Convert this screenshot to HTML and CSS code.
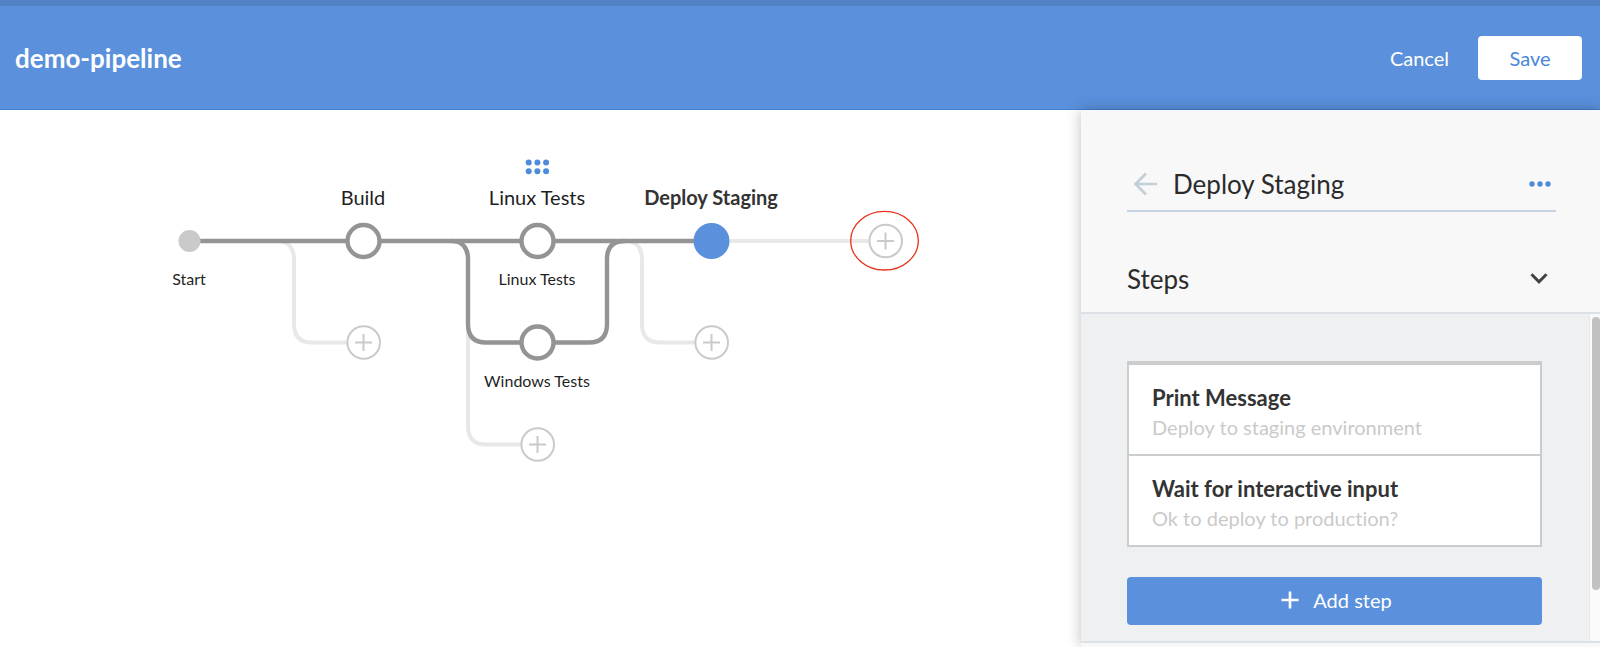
FILE: index.html
```html
<!DOCTYPE html>
<html lang="en">
<head>
<meta charset="utf-8">
<meta name="viewport" content="width=device-width, initial-scale=1">
<title>demo-pipeline</title>
<link rel="stylesheet" href="styles.css">
</head>
<body>
<header class="topbar">
  <h1 class="topbar-title">demo-pipeline</h1>
  <div class="topbar-actions">
    <button class="btn-cancel" type="button">Cancel</button>
    <button class="btn-save" type="button">Save</button>
  </div>
</header>
<main class="editor">
  <section class="graph" aria-label="Pipeline">
    <svg class="graph-lines" width="940" height="400" viewBox="0 0 940 400" fill="none" aria-hidden="true">
      <g stroke="#e8e8e8" stroke-width="4">
        <path d="M711 131H868"/>
        <path d="M278 131C289 131 294 139 294 149V214Q294 232.500 312 232.500H347"/>
        <path d="M626 131C637 131 642 139 642 149V214Q642 232.500 660 232.500H695"/>
        <path d="M468 200V316Q468 334.500 486 334.500H521"/>
      </g>
      <g stroke="#949494" stroke-width="4.400">
        <path d="M199 131H711"/>
        <path d="M452 131C463 131 468 139 468 149V214Q468 232.500 486 232.500H589Q607 232.500 607 214V149Q607 131 625 131"/>
      </g>
      <circle cx="189.500" cy="131" r="11" fill="#cacaca"/>
      <g fill="#fff" stroke="#949494" stroke-width="4.400">
        <circle cx="363.500" cy="131" r="16"/>
        <circle cx="537.500" cy="131" r="16"/>
        <circle cx="537.500" cy="232.500" r="16"/>
      </g>
      <circle cx="711.500" cy="131" r="18" fill="#5a90dc"/>
      <g fill="#fff" stroke="#cacaca" stroke-width="2">
        <path d="M380 232.500A16.300 16.300 0 1 1 347.400 232.500A16.300 16.300 0 1 1 380 232.500M363.500 224V241M355 232.500H372"/>
        <path d="M728 232.500A16.300 16.300 0 1 1 695.400 232.500A16.300 16.300 0 1 1 728 232.500M711.500 224V241M703 232.500H720"/>
        <path d="M554 334.500A16.300 16.300 0 1 1 521.400 334.500A16.300 16.300 0 1 1 554 334.500M537.500 326V343M529 334.500H546"/>
        <path d="M902 131A16.300 16.300 0 1 1 869.400 131A16.300 16.300 0 1 1 902 131M885.500 122.500V139.500M877 131H894"/>
      </g>
      <ellipse cx="884.500" cy="130.700" rx="33.800" ry="29.300" stroke="#e8321a" stroke-width="1.300"/>
      <g fill="#4f8bdb">
        <circle cx="528.700" cy="52.500" r="3"/><circle cx="537.400" cy="52.500" r="3"/><circle cx="546.100" cy="52.500" r="3"/>
        <circle cx="528.700" cy="61.300" r="3"/><circle cx="537.400" cy="61.300" r="3"/><circle cx="546.100" cy="61.300" r="3"/>
      </g>
    </svg>
    <span class="label label-start">Start</span>
    <span class="stage stage-build">Build</span>
    <span class="stage stage-tests">Linux Tests</span>
    <span class="label label-linux">Linux Tests</span>
    <span class="label label-windows">Windows Tests</span>
    <span class="stage stage-deploy">Deploy Staging</span>
    <button class="add add-build" type="button" aria-label="Add parallel to Build"></button>
    <button class="add add-tests" type="button" aria-label="Add parallel to Linux Tests"></button>
    <button class="add add-deploy" type="button" aria-label="Add parallel to Deploy Staging"></button>
    <button class="add add-stage" type="button" aria-label="Add stage"></button>
  </section>
  <aside class="panel">
    <div class="panel-head">
      <button class="icon-btn" type="button" aria-label="Back">
        <svg width="24" height="24" viewBox="0 0 24 24" fill="none" stroke="#c3cfd6" stroke-width="2.600"><path d="M13 1.500L2.500 12L13 22.500M2.500 12H24"/></svg>
      </button>
      <h2 class="panel-title">Deploy Staging</h2>
      <button class="icon-btn more" type="button" aria-label="More options">
        <svg width="22" height="6" viewBox="0 0 22 6" fill="#4f8bdb"><circle cx="3" cy="3" r="2.700"/><circle cx="11" cy="3" r="2.700"/><circle cx="19" cy="3" r="2.700"/></svg>
      </button>
    </div>
    <div class="steps-head">
      <h3 class="steps-title">Steps</h3>
      <button class="icon-btn" type="button" aria-label="Collapse steps">
        <svg width="18" height="12" viewBox="0 0 18 12" fill="none" stroke="#434343" stroke-width="3"><path d="M1.500 1.300L9 8.800L16.500 1.300"/></svg>
      </button>
    </div>
    <div class="steps-body">
      <div class="steps-content">
        <ul class="steps">
          <li class="step"><strong class="step-name">Print Message</strong><span class="step-note">Deploy to staging environment</span></li>
          <li class="step"><strong class="step-name">Wait for interactive input</strong><span class="step-note">Ok to deploy to production?</span></li>
        </ul>
        <button class="btn-add" type="button">
          <svg width="18" height="18" viewBox="0 0 18 18" fill="none" stroke="#fff" stroke-width="2.600"><path d="M9 0.500V17.500M0.500 9H17.500"/></svg>
          Add step
        </button>
      </div>
      <div class="track"><div class="thumb"></div></div>
    </div>
  </aside>
</main>
</body>
</html>
```
FILE: styles.css
```css
* { box-sizing: border-box; }

body {
  margin: 0;
  min-height: 100vh;
  display: flex;
  flex-direction: column;
  background: #fff;
  color: #1f1f1f;
  font-family: Lato, "Liberation Sans", sans-serif;
  font-variant-ligatures: none;
  overflow: hidden;
}

button {
  margin: 0;
  padding: 0;
  border: 0;
  background: none;
  font: inherit;
  font-variant-ligatures: none;
  cursor: pointer;
}

h1, h2, h3 { margin: 0; font-weight: 400; }

.topbar {
  display: flex;
  align-items: center;
  justify-content: space-between;
  height: 110px;
  padding: 0 18px 0 15px;
  background: #5a90dc;
  border-top: 6px solid #5282c6;
  border-bottom: 1px solid #3f7fd0;
  color: #fff;
}

.topbar-title { font-size: 26px; line-height: 32px; font-weight: 700; }
.topbar-actions { display: flex; align-items: center; gap: 29px; font-size: 20px; }
.btn-cancel { color: #fff; }
.btn-save {
  width: 104px;
  height: 44px;
  border-radius: 4px;
  background: #fff;
  color: #4a86d9;
}

.editor { flex: 1; display: flex; }
.graph { position: relative; flex: 1; min-width: 0; }
.graph-lines { display: block; }

.stage, .label {
  position: absolute;
  transform: translateX(-50%);
  white-space: nowrap;
}
.stage { top: 75px; font-size: 20px; line-height: 24px; }
.label { top: 159px; font-size: 16px; line-height: 20px; }
.label-start { left: 189px; }
.stage-build { left: 363px; }
.stage-tests, .label-linux, .label-windows { left: 537px; }
.label-windows { top: 261px; }
.stage-deploy { left: 711px; font-weight: 700; color: #333; }

.add {
  position: absolute;
  width: 34px;
  height: 34px;
  border-radius: 50%;
}
.add-build { left: 346px; top: 216px; }
.add-tests { left: 520px; top: 318px; }
.add-deploy { left: 694px; top: 216px; }
.add-stage { left: 868px; top: 114px; }

.panel {
  display: flex;
  flex-direction: column;
  width: 519px;
  padding-bottom: 4px;
  background: #f8f8f8;
  box-shadow: 0 0 14px rgba(0, 0, 0, 0.25);
}

.icon-btn { display: flex; }

.panel-head {
  display: flex;
  align-items: center;
  gap: 16px;
  margin: 48px 44px 0 46px;
  padding: 0 5px 0 6px;
  height: 54px;
  border-bottom: 2px solid #c5d3e2;
}
.panel-title { flex: 1; font-size: 26px; line-height: 32px; color: #2b2b2b; }

.steps-head {
  display: flex;
  align-items: center;
  justify-content: space-between;
  height: 102px;
  padding: 34px 52px 0 46px;
  border-bottom: 2px solid #dbe1e7;
}
.steps-title { font-size: 26px; line-height: 32px; color: #2b2b2b; }

.steps-body {
  flex: 1;
  display: flex;
  background: #eff0f2;
  border-bottom: 2px solid #dbe1e7;
}
.steps-content { flex: 1; padding: 47px 47px 16px 46px; }

.steps {
  margin: 0 0 30px;
  padding: 0;
  list-style: none;
  background: #fff;
  border: 2px solid #cacccd;
  border-top-width: 4px;
}
.step { display: flex; flex-direction: column; padding: 19px 23px 12px; }
.step + .step { border-top: 2px solid #cacccd; }
.step-name { font-size: 22px; line-height: 28px; color: #333; }
.step-note { font-size: 20px; line-height: 30px; color: #cacaca; }

.btn-add {
  display: flex;
  align-items: center;
  justify-content: center;
  gap: 14px;
  width: 100%;
  height: 48px;
  padding: 0 0 2px 4px;
  border-radius: 4px;
  background: #5a90dc;
  color: #fff;
  font-size: 20px;
}

.track {
  width: 11px;
  padding: 3px 0 0 2px;
  background: #fafafa;
  border-left: 1px solid #e8e8e8;
}
.thumb { height: 273px; border-radius: 4px; background: #c1c1c1; }
```
